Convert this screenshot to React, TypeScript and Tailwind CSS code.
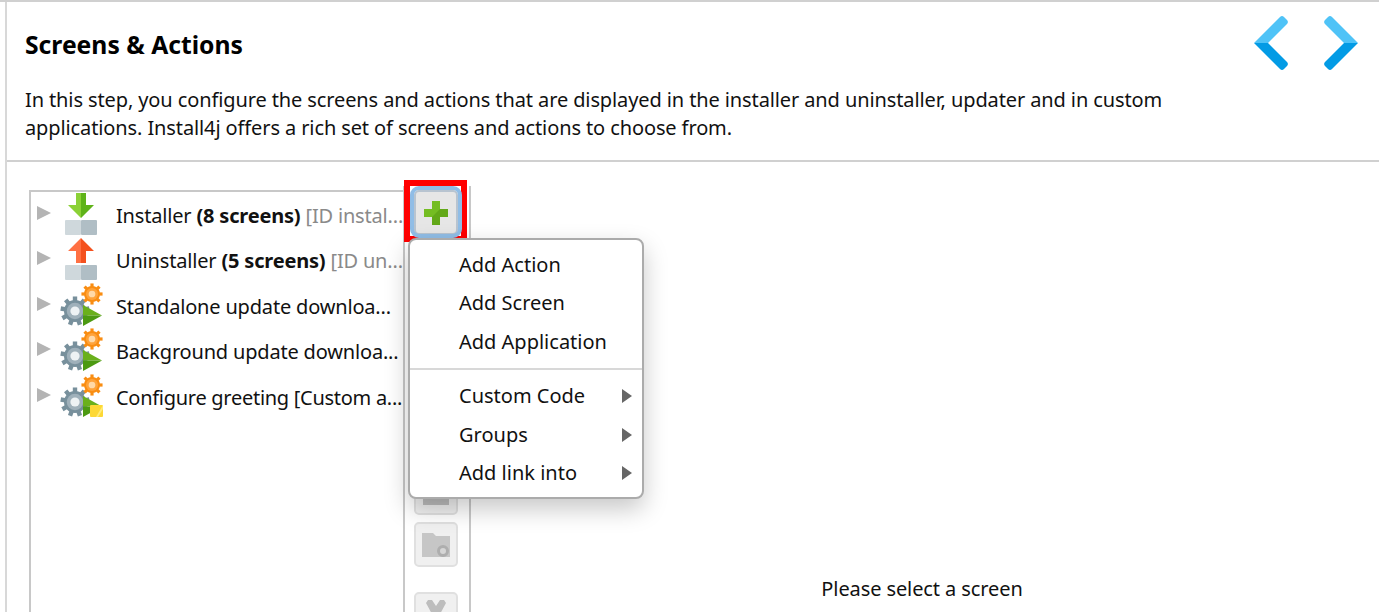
import React from 'react'

const font = { fontFamily: '"Noto Sans", sans-serif' }

function Stack() {
  return (
    <g>
      <rect x="0" y="27" width="16" height="15" rx="1" fill="#cfd8dc" />
      <rect x="16" y="27" width="16" height="15" rx="1" fill="#b0bec5" />
    </g>
  )
}

function InstallerIcon() {
  return (
    <svg width="32" height="42" viewBox="0 0 32 42" className="mb-[4px] ml-[5px] shrink-0">
      <path d="M11 0h5v25L3 12h8z" fill="#8bd136" />
      <path d="M16 0h5v12h8L16 25z" fill="#5fb319" />
      <Stack />
    </svg>
  )
}

function UninstallerIcon() {
  return (
    <svg width="32" height="42" viewBox="0 0 32 42" className="mb-[4px] ml-[5px] shrink-0">
      <path d="M16 0L3 13h8v12h5z" fill="#ff7043" />
      <path d="M16 0l13 13h-8v12h-5z" fill="#f4511e" />
      <Stack />
    </svg>
  )
}

function Gear({ cx, cy, r, fill, inner, hole, teeth }: { cx: number; cy: number; r: number; fill: string; inner: string; hole: string; teeth: number }) {
  const marks = Array.from({ length: teeth }, (_, i) => (i * 360) / teeth)
  return (
    <g>
      {marks.map((a) => (
        <rect key={a} x={cx - r * 0.2} y={cy - r * 1.32} width={r * 0.4} height={r * 0.6} fill={fill} transform={`rotate(${a} ${cx} ${cy})`} />
      ))}
      <circle cx={cx} cy={cy} r={r} fill={fill} />
      <circle cx={cx} cy={cy} r={r * 0.75} fill={inner} />
      <circle cx={cx} cy={cy} r={r * 0.42} fill={hole} />
    </g>
  )
}

function ScriptIcon({ note }: { note?: boolean }) {
  return (
    <svg width="44" height="44" viewBox="0 0 44 44" className="mb-[4px] shrink-0">
      <Gear cx={15} cy={28} r={11} fill="#78909c" inner="#9fb0ba" hole="#eef2f4" teeth={9} />
      <Gear cx={32} cy={11} r={8} fill="#f98d12" inner="#ffa33a" hole="#ffd9a8" teeth={8} />
      <path d="M23 22l19 10.500H23z" fill="#6ab01c" />
      <path d="M23 32.500h19L23 43z" fill="#4c9a12" />
      {note && (
        <g>
          <rect x="30" y="31" width="13" height="12" rx="1" fill="#fdd835" />
          <path d="M43 31v4l-5 8h-2z" fill="#ffeb7a" />
        </g>
      )}
    </svg>
  )
}

function Row({ icon, children }: { icon: React.ReactNode; children: React.ReactNode }) {
  return (
    <div className="flex h-[45.500px] items-center whitespace-nowrap">
      <div className="ml-[6px] mb-[6px] h-0 w-0 shrink-0 border-y-[7px] border-l-[14px] border-y-transparent border-l-[#b4b4b4]" />
      <div className="ml-[9px] flex w-[56px] shrink-0 justify-start">{icon}</div>
      <div className="text-[20px] leading-[28px] tracking-[-0.18px] text-[#111]">{children}</div>
    </div>
  )
}

function ToolButton({ children }: { children?: React.ReactNode }) {
  return (
    <div className="mb-[7px] flex h-[45px] w-[44px] shrink-0 items-center justify-center rounded-[5px] border-2 border-[#e0e0e0] bg-[#f0f0f0]">
      {children}
    </div>
  )
}

function MenuItem({ label, sub }: { label: string; sub?: boolean }) {
  return (
    <div className="flex h-[38.500px] items-center justify-between pl-[49px] pr-[10px] text-[20px] text-[#111]">
      <span>{label}</span>
      {sub && <span className="h-0 w-0 border-y-[7px] border-l-[10px] border-y-transparent border-l-[#666]" />}
    </div>
  )
}

export default function App() {
  return (
    <div className="relative h-[612px] w-[1379px] overflow-hidden bg-white" style={font}>
      <div className="flex h-full flex-col border-t-2 border-[#d0d0d0]">
        <div className="ml-[5px] flex h-full flex-col border-l-2 border-[#d8d8d8]">
          <header className="relative h-[160px] shrink-0 border-b-2 border-[#d0d0d0] pl-[18px]">
            <h1 className="pt-[27px] text-[24.700px] font-bold leading-[32px] text-black">Screens &amp; Actions</h1>
            <p className="mt-[25px] w-[1160px] text-[20px] leading-[28px] tracking-[-0.11px] text-[#111]">
              In this step, you configure the screens and actions that are displayed in the installer and uninstaller, updater and in custom applications. Install4j offers a rich set of screens and actions to choose from.
            </p>
            <div className="absolute right-[20px] top-[14px] flex gap-[34px]">
              <svg width="36" height="54" viewBox="0 0 36 54">
                <path d="M27 1a3 3 0 0 1 4 0l3 3a3 3 0 0 1 0 4L15 27H1z" fill="#4fc3f7" />
                <path d="M1 27h14l19 19a3 3 0 0 1 0 4l-3 3a3 3 0 0 1-4 0z" fill="#039be5" />
              </svg>
              <svg width="36" height="54" viewBox="0 0 36 54">
                <path d="M9 1a3 3 0 0 0-4 0L2 4a3 3 0 0 0 0 4l19 19h14z" fill="#4fc3f7" />
                <path d="M35 27H21L2 46a3 3 0 0 0 0 4l3 3a3 3 0 0 0 4 0z" fill="#039be5" />
              </svg>
            </div>
          </header>

          <div className="flex min-h-0 flex-1 pl-[22px] pt-[28px]">
            <div className="h-[500px] w-[374px] shrink-0 overflow-hidden border-2 border-b-0 border-r-0 border-[#c8c8c8] pt-[1px]">
              <Row icon={<InstallerIcon />}>
                Installer <b>(8 screens)</b> <span className="text-[#8a8a8a]">[ID instal...</span>
              </Row>
              <Row icon={<UninstallerIcon />}>
                Uninstaller <b>(5 screens)</b> <span className="text-[#8a8a8a]">[ID un...</span>
              </Row>
              <Row icon={<ScriptIcon />}>Standalone update downloa...</Row>
              <Row icon={<ScriptIcon />}>Background update downloa...</Row>
              <Row icon={<ScriptIcon note />}>
                <span className="tracking-[-0.28px]">Configure greeting [Custom a...</span>
              </Row>
            </div>

            <div className="-mt-[4px] flex w-[68px] shrink-0 flex-col items-center border-x-2 border-[#c8c8c8] pr-[2px] pt-[4px]">
              <div className="mb-[27px] flex h-[45px] w-[44px] shrink-0 items-center justify-center rounded-[5px] border-2 border-[#b8c4d0] bg-[#e6e6e6]">
                <svg width="26" height="26" viewBox="0 0 26 26">
                  <path d="M9 1h8v8h8v8h-8v8H9v-8H1V9h8z" fill="#74bd22" />
                  <path d="M17 9h8v8h-8v8H9v-8z" fill="#62a818" />
                </svg>
              </div>
              <ToolButton />
              <ToolButton />
              <ToolButton />
              <ToolButton />
              <ToolButton>
                <div className="mt-[10px] h-[14px] w-[26px] bg-[#bdbdbd]" />
              </ToolButton>
              <ToolButton>
                <svg width="28" height="24" viewBox="0 0 28 24">
                  <path d="M0 0h11l3 3h14v21H0z" fill="#c6c6c6" />
                  <circle cx="21" cy="18" r="4.500" fill="#d6d6d6" stroke="#aeaeae" strokeWidth="3" />
                </svg>
              </ToolButton>
              <div className="mt-[18px] flex h-[45px] w-[44px] shrink-0 justify-center rounded-[5px] border-2 border-[#e0e0e0] bg-[#f0f0f0] pt-[6px]">
                <svg width="20" height="16" viewBox="0 0 20 16">
                  <path d="M2 0h4l4 6 4-6h4l2 3-7 13H7L0 3z" fill="#bdbdbd" />
                </svg>
              </div>
            </div>

            <div className="flex flex-1 justify-center pr-[6px] pt-[385px]">
              <span className="text-[20px] leading-[28px] tracking-[-0.1px] text-[#111]">Please select a screen</span>
            </div>
          </div>
        </div>
      </div>

      {/* red highlight + focus ring, both sit over the toolbar */}
      <div className="absolute left-[404px] top-[180px] h-[62px] w-[63px] border-[6px] border-[#ff0000]" />
      <div className="absolute left-[410px] top-[186px] h-[52px] w-[52px] rounded-[9px] border-[4px] border-[#90bde6]" />

      <div className="absolute left-[408px] top-[238px] h-[261px] w-[236px] rounded-[8px] border-2 border-[#ababab] bg-white shadow-[0_10px_24px_rgba(0,0,0,0.22)]">
        <div className="pt-[5.500px]">
          <MenuItem label="Add Action" />
          <MenuItem label="Add Screen" />
          <MenuItem label="Add Application" />
        </div>
        <div className="my-[7px] h-[2px] bg-[#d8d8d8]" />
        <MenuItem label="Custom Code" sub />
        <MenuItem label="Groups" sub />
        <MenuItem label="Add link into" sub />
      </div>
    </div>
  )
}
